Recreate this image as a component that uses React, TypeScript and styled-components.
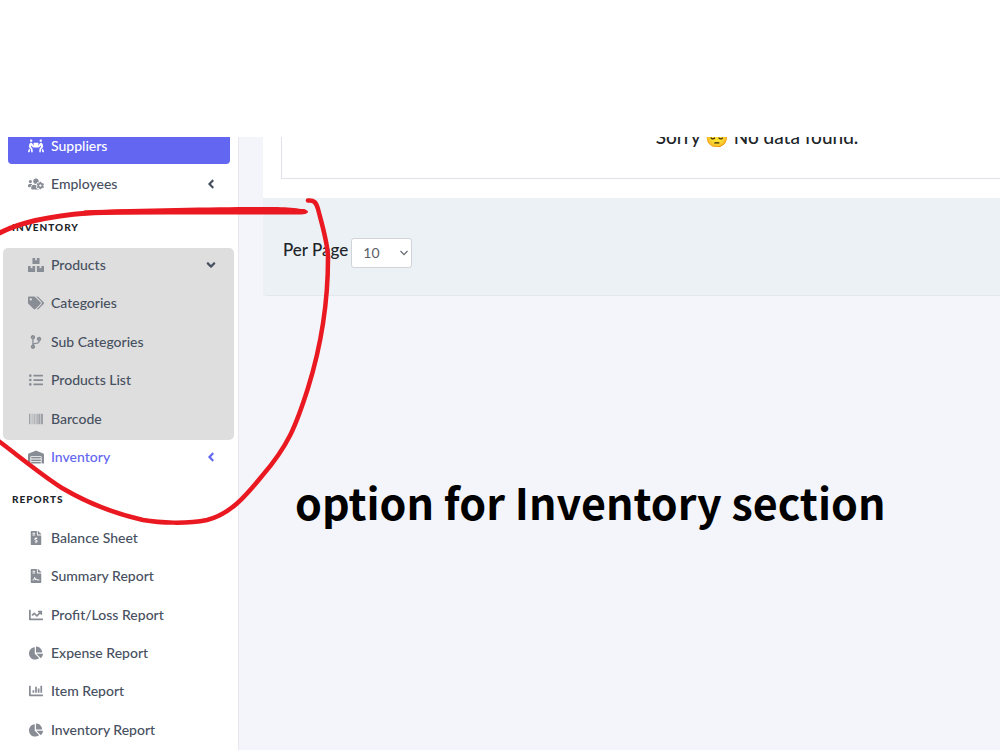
import React from "react";
import styled, { createGlobalStyle } from "styled-components";
import {
  FaPeopleCarry, FaUsersCog, FaBoxes, FaTags, FaCodeBranch, FaListUl, FaBarcode,
  FaWarehouse, FaFileInvoiceDollar, FaFileContract, FaChartLine, FaChartPie,
  FaChartBar, FaAngleLeft, FaAngleDown,
} from "react-icons/fa";
import type { IconType } from "react-icons";

const GlobalStyle = createGlobalStyle`
  *, *::before, *::after { box-sizing: border-box; }
  html { background: #ffffff; }
  body {
    margin: 0;
    overflow: hidden;
    font-family: Lato, "Noto Sans", sans-serif;
    color: #212529;
  }
`;

const Page = styled.div`
  position: relative;
  min-height: 100vh;
  padding-top: 137px;
  display: flex;
  flex-direction: column;
  background: #ffffff;
  overflow: hidden;
`;

const Shell = styled.div`
  flex: 1;
  display: flex;
  background: #f4f5fa;
  overflow: hidden;
`;

const Sidebar = styled.nav`
  flex: none;
  width: 239px;
  background: #ffffff;
  border-right: 1px solid #e6e8ee;
`;

const TopGroup = styled.ul`
  list-style: none;
  margin: -9px 0 0;
  padding: 0 8px 2px;
  display: grid;
  gap: 2px;
`;

const Group = styled.ul<{ $shaded?: boolean; $rows: number }>`
  list-style: none;
  margin: 0 ${(p) => (p.$shaded ? 4 : 8)}px 0 ${(p) => (p.$shaded ? 3 : 8)}px;
  padding: 0 ${(p) => (p.$shaded ? 4 : 0)}px 0 ${(p) => (p.$shaded ? 5 : 0)}px;
  min-height: ${(p) => (p.$rows === 5 ? 192 : 230)}px;
  display: grid;
  grid-auto-rows: 1fr;
  border-radius: 5px;
  background: ${(p) => (p.$shaded ? "#dedede" : "transparent")};
`;

const SingleGroup = styled.ul`
  list-style: none;
  margin: 0;
  padding: 0 8px 2px;
`;

const ItemLink = styled.a<{ $active?: boolean; $accent?: boolean; $compact?: boolean }>`
  height: ${(p) => (p.$compact ? 34 : 36)}px;
  padding: 0 12px 0 20px;
  display: flex;
  align-items: center;
  gap: 7px;
  border-radius: 4px;
  font-size: 14px;
  line-height: 20px;
  font-weight: 500;
  text-decoration: none;
  color: ${(p) => (p.$active ? "#ffffff" : p.$accent ? "#6366f1" : "#475060")};
  background: ${(p) => (p.$active ? "#6366f1" : "transparent")};
`;

const IconSlot = styled.span<{ $active?: boolean; $wide?: boolean }>`
  flex: none;
  width: 16px;
  display: flex;
  justify-content: center;
  font-size: ${(p) => (p.$wide ? 16 : 14)}px;
  color: ${(p) => (p.$active ? "#ffffff" : "#888c94")};
`;

const Label = styled.span`
  flex: 1;
`;

const Chevron = styled.span`
  display: flex;
  font-size: 14px;
`;

const SectionTitle = styled.h2`
  margin: 0;
  padding: 14px 12px 12px;
  font-size: 10px;
  line-height: 18px;
  font-weight: 900;
  letter-spacing: 1px;
  text-transform: uppercase;
`;

const Main = styled.main`
  flex: 1;
  min-width: 0;
  padding-left: 24px;
  overflow: hidden;
`;

const Card = styled.section`
  min-width: 988px;
  background: #ffffff;
  border-radius: 0 0 4px 4px;
`;

const CardBody = styled.div`
  padding: 0 18px 19px;
`;

const EmptyState = styled.div`
  display: flow-root;
  height: 42px;
  border: 1px solid #dfe3e7;
  border-top: 0;
  text-align: center;
`;

const EmptyText = styled.p`
  margin: -12px 0 0;
  font-size: 19px;
  line-height: 24px;
  font-weight: 500;
`;

const CardFooter = styled.div`
  height: 98px;
  padding: 12px 20px 0;
  display: flex;
  align-items: center;
  gap: 3px;
  background: #ebf1f5;
  border-bottom: 1px solid #e3e8ed;
  border-radius: 0 0 4px 4px;
`;

const PerPageLabel = styled.label`
  font-size: 17px;
  line-height: 24px;
  font-weight: 500;
  padding-bottom: 6px;
`;

const PerPageSelect = styled.select`
  width: 61px;
  height: 30px;
  padding: 0 11px;
  appearance: none;
  border: 1px solid #d0d4d9;
  border-radius: 3px;
  color: #5c6066;
  font-family: inherit;
  font-size: 14px;
  background: #ffffff url("data:image/svg+xml,%3Csvg xmlns='http://www.w3.org/2000/svg' width='8' height='6' fill='none' stroke='%23666a70' stroke-width='1.2'%3E%3Cpath d='M.5 1 4 4.7 7.5 1'/%3E%3C/svg%3E") no-repeat right 3px center;
`;

const Caption = styled.h1`
  margin: 0;
  padding: 175px 0 0 32px;
  font-family: "Noto Sans CJK SC", "Open Sans", sans-serif;
  font-size: 43px;
  line-height: 60px;
  font-weight: 700;
  color: #000000;
  white-space: nowrap;
`;

const Marker = styled.svg`
  position: absolute;
  left: 0;
  top: 0;
  pointer-events: none;
`;

type Entry = {
  label: string;
  icon: IconType;
  wide?: boolean;
  active?: boolean;
  accent?: boolean;
  compact?: boolean;
  chevron?: "left" | "down";
};

const people: Entry[] = [
  { label: "Suppliers", icon: FaPeopleCarry, wide: true, active: true },
  { label: "Employees", icon: FaUsersCog, wide: true, chevron: "left" },
];

const products: Entry[] = [
  { label: "Products", icon: FaBoxes, wide: true, chevron: "down" },
  { label: "Categories", icon: FaTags, wide: true },
  { label: "Sub Categories", icon: FaCodeBranch },
  { label: "Products List", icon: FaListUl },
  { label: "Barcode", icon: FaBarcode },
];

const inventory: Entry = { label: "Inventory", icon: FaWarehouse, wide: true, accent: true, chevron: "left" };

const reports: Entry[] = [
  { label: "Balance Sheet", icon: FaFileInvoiceDollar },
  { label: "Summary Report", icon: FaFileContract },
  { label: "Profit/Loss Report", icon: FaChartLine },
  { label: "Expense Report", icon: FaChartPie },
  { label: "Item Report", icon: FaChartBar },
  { label: "Inventory Report", icon: FaChartPie },
];

function NavItem({ label, icon: Icon, wide, active, accent, compact, chevron }: Entry) {
  return (
    <li>
      <ItemLink href="#" $active={active} $accent={accent} $compact={compact}>
        <IconSlot $active={active} $wide={wide}><Icon /></IconSlot>
        <Label>{label}</Label>
        {chevron && <Chevron>{chevron === "left" ? <FaAngleLeft /> : <FaAngleDown />}</Chevron>}
      </ItemLink>
    </li>
  );
}

export default function App() {
  return (
    <Page>
      <GlobalStyle />
      <Shell>
        <Sidebar>
          <TopGroup>{people.map((e) => <NavItem key={e.label} {...e} />)}</TopGroup>
          <SectionTitle>Inventory</SectionTitle>
          <Group $shaded $rows={5}>{products.map((e) => <NavItem key={e.label} {...e} compact />)}</Group>
          <SingleGroup><NavItem {...inventory} compact /></SingleGroup>
          <SectionTitle>Reports</SectionTitle>
          <Group $rows={6}>{reports.map((e) => <NavItem key={e.label} {...e} />)}</Group>
        </Sidebar>
        <Main>
          <Card>
            <CardBody>
              <EmptyState><EmptyText>Sorry 😔 No data found.</EmptyText></EmptyState>
            </CardBody>
            <CardFooter>
              <PerPageLabel htmlFor="per-page">Per Page</PerPageLabel>
              <PerPageSelect id="per-page" defaultValue="10">
                <option>10</option>
                <option>25</option>
                <option>50</option>
              </PerPageSelect>
            </CardFooter>
          </Card>
          <Caption>option for Inventory section</Caption>
        </Main>
      </Shell>
      <Marker width="340" height="540" viewBox="0 0 340 540" fill="none" aria-hidden="true">
        <path
          d="M-4 235C18 222 50 216 88 213C130 211 200 211 304 211.500"
          stroke="#ea1820" strokeWidth="5" strokeLinecap="round"
        />
        <path
          d="M84 210.500C150 208 230 207 270 207C290 207 308 209 308 211.500C308 214 304 214.500 296 214.500L180 214.500C140 214.500 110 214 84 215.500Z"
          fill="#ea1820"
        />
        <path
          d="M308 200.500C314 200 316 202 318 209C323 228 328 244 328 258C328 300 323 340 308 388C296 426 288 446 262 476C244 498 230 514 207 520C187 524 160 523 143 520C112 513 84 501 62 488C40 474 20 457 -4 439"
          stroke="#ea1820" strokeWidth="4.500" strokeLinecap="round" strokeLinejoin="round"
        />
      </Marker>
    </Page>
  );
}
